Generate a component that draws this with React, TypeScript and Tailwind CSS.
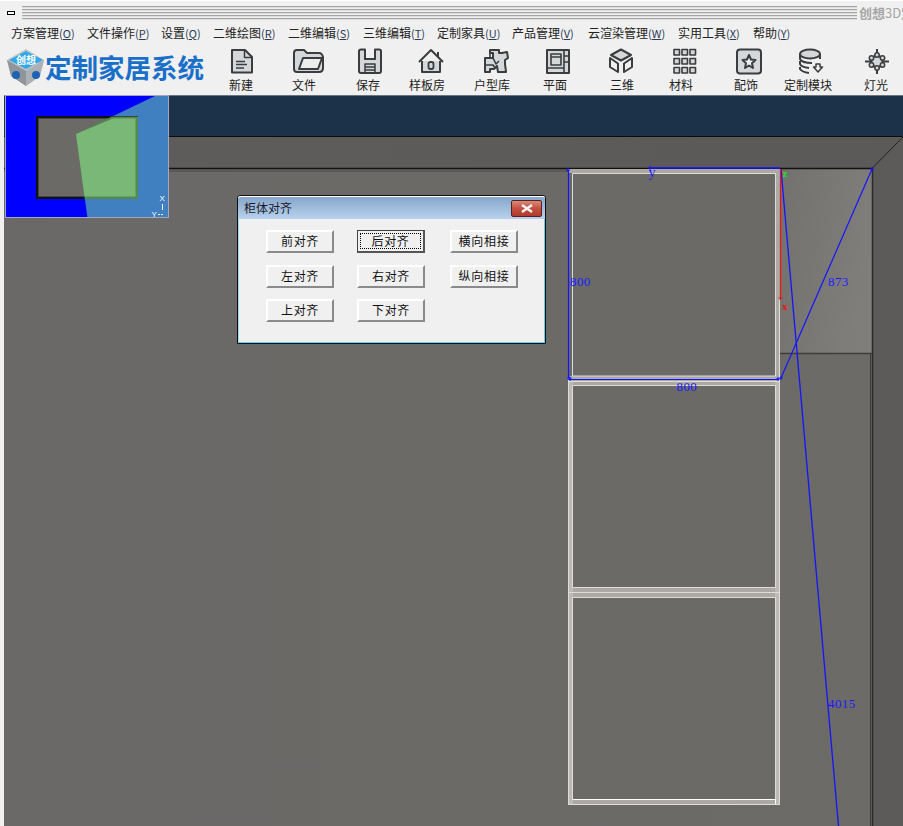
import React from "react";

const S = "#3a3c3e";
const F = "#d5d8da";

const menu: { t: string; k: string; w: string }[] = [
  { t: "方案管理", k: "O", w: "w-[76px]" },
  { t: "文件操作", k: "P", w: "w-[74px]" },
  { t: "设置", k: "Q", w: "w-[52px]" },
  { t: "二维绘图", k: "R", w: "w-[75px]" },
  { t: "二维编辑", k: "S", w: "w-[75px]" },
  { t: "三维编辑", k: "T", w: "w-[74px]" },
  { t: "定制家具", k: "U", w: "w-[75px]" },
  { t: "产品管理", k: "V", w: "w-[76px]" },
  { t: "云渲染管理", k: "W", w: "w-[90px]" },
  { t: "实用工具", k: "X", w: "w-[75px]" },
  { t: "帮助", k: "Y", w: "w-[60px]" },
];

const Ic = ({ children }: { children: React.ReactNode }) => (
  <svg width="34" height="27" viewBox="0 0 34 27" fill="none" stroke={S} strokeWidth="2" strokeLinejoin="round">{children}</svg>
);

const icons: Record<string, React.ReactNode> = {
  doc: (<Ic><path d="M7 2H20L27 9V24.500H7Z" fill={F} /><path d="M19.500 2V9.500H27" strokeWidth="1.500" /><path d="M11 13.500H20M11 16.500H22M11 20H19" strokeWidth="1.300" /></Ic>),
  folder: (<Ic><path d="M3 21V5Q3 2 6 2H13L16 5H28Q31 5 32 9V20Q32 24 28 24H6Q3 24 3 21Z" fill={F} /><path d="M8 21L12 10H31L27 21Z" fill="#eceded" /></Ic>),
  save: (<Ic><path d="M6 3Q6 1.500 8 1.500H12V11H22V1.500H26Q28 1.500 28 3V23Q28 25 26 25H8Q6 25 6 23Z" fill={F} /><path d="M12 16H22V25H12ZM12 19H22M12 22H22" strokeWidth="1.500" /><path d="M12 1.500V11H22V1.500" /></Ic>),
  house: (<Ic><path d="M5 14L17 2L29 14M24 4V9" /><path d="M8 13V24H26V13" fill={F} /><rect x="14.500" y="14" width="5" height="7" rx="2" strokeWidth="1.800" /></Ic>),
  plan: (<Ic><path d="M11 2H20V5H23L28 4L29 10L26 12V16L27 24H19L18 18L15 21H11V24H6V10H14V5L11 5Z" fill={F} /><path d="M6 17H14L16 20M20 13L17 16L14 10M11 2V9" strokeWidth="1.600" /></Ic>),
  flat: (<Ic><rect x="6" y="2" width="22" height="23" fill={F} /><path d="M10 6H20V17H10ZM23 2V25M6 20H23M23 8H28M23 14H28M10 9H20" strokeWidth="1.600" /></Ic>),
  cube: (<Ic><path d="M17 1.500L27 7L17 12.500L7 7Z" fill={F} /><path d="M6 10V19L14 24V15.500ZM28 10V19L20 24V15.500Z" fill="#f0f0f0" /></Ic>),
  grid: (<Ic>{[1.500, 10.500, 19.500].flatMap((y) => [7, 15, 23].map((x) => <rect key={x + "-" + y} x={x} y={y} width="5.500" height="5.500" fill={F} strokeWidth="1.600" />))}</Ic>),
  star: (<Ic><rect x="5" y="1.500" width="24" height="24" rx="3" fill={F} /><path d="M17 7L19 11.500L23.500 12L20 15.200L21 20L17 17.500L13 20L14 15.200L10.500 12L15 11.500Z" fill="#eceded" /></Ic>),
  db: (<Ic><ellipse cx="15" cy="6" rx="10" ry="4.500" fill={F} /><path d="M5 6V11Q7 15 17 15M5 13V16Q6 19 14 20M5 19V21Q7 24 14 25" /><path d="M25 6V11" /><path d="M21 16H25V19H27.500L23 24L18.500 19H21Z" strokeWidth="1.500" /></Ic>),
  light: (<Ic><path d="M17 1V7M17 20V26M5 13.500H11M23 13.500H29" /><path d="M17 7L22.500 10V17L17 20L11.500 17V10Z" fill={F} /><circle cx="17" cy="7" r="2.200" fill={F} strokeWidth="1.500" /><circle cx="17" cy="20" r="2.200" fill={F} strokeWidth="1.500" /><circle cx="11.500" cy="10" r="2.200" fill={F} strokeWidth="1.500" /><circle cx="22.500" cy="10" r="2.200" fill={F} strokeWidth="1.500" /><circle cx="11.500" cy="17" r="2.200" fill={F} strokeWidth="1.500" /><circle cx="22.500" cy="17" r="2.200" fill={F} strokeWidth="1.500" /></Ic>),
};

const tools = [
  { label: "新建", icon: "doc", m: "ml-[4px]", o: "ml-[2px]" },
  { label: "文件", icon: "folder", m: "ml-[7px]", o: "ml-[8px]" },
  { label: "保存", icon: "save", m: "ml-[8px]", o: "ml-[4px]" },
  { label: "样板房", icon: "house", m: "ml-[3px]", o: "ml-[8px]" },
  { label: "户型库", icon: "plan", m: "ml-[9px]", o: "ml-[8px]" },
  { label: "平面", icon: "flat", m: "ml-[7px]", o: "ml-[5px]" },
  { label: "三维", icon: "cube", m: "ml-[11px]", o: "mr-[2px]" },
  { label: "材料", icon: "grid", m: "ml-[3px]", o: "ml-[6px]" },
  { label: "配饰", icon: "star", m: "ml-[9px]", o: "ml-[6px]" },
  { label: "定制模块", icon: "db", m: "ml-[6px]", o: "ml-[8px]" },
  { label: "灯光", icon: "light", m: "ml-[12px]", o: "ml-[2px]" },
];

const Btn = ({ label, focus, className = "" }: { label: string; focus?: boolean; className?: string }) => (
  <div className={`flex h-[23px] w-[68px] items-center justify-center bg-[#f0f0f0] text-[12px] tracking-[0.7px] text-[#111] ${focus ? "border border-[#444] border-r-2 border-b-2 border-r-[#555] border-b-[#555] p-[2px]" : "border-2 border-t-white border-l-white border-r-[#8a8a8a] border-b-[#8a8a8a] pb-[2px]"} ${className}`}>
    {focus ? (
      <div className="flex h-full w-full items-center justify-center border border-dotted border-black pb-[1px]">{label}</div>
    ) : label}
  </div>
);

const Mark = ({ x, y }: { x: number; y: number }) => (
  <path d={`M${x - 2} ${y}H${x + 2}M${x} ${y - 2}V${y + 2}`} stroke="#1414ff" strokeWidth="1" fill="none" />
);

const Scene = () => (
  <svg className="block h-full w-full" viewBox="4 95 899 731" preserveAspectRatio="none">
    <defs>
      <linearGradient id="panel" x1="0" y1="0" x2="1" y2="0.3">
        <stop offset="0" stopColor="#73716e" />
        <stop offset="1" stopColor="#807e7a" />
      </linearGradient>
      <linearGradient id="wall" x1="0" y1="0" x2="1" y2="0">
        <stop offset="0" stopColor="#6a6967" />
        <stop offset="1" stopColor="#6c6b68" />
      </linearGradient>
      <linearGradient id="ceil" x1="0" y1="0" x2="1" y2="0">
        <stop offset="0" stopColor="#5e5d5b" />
        <stop offset="1" stopColor="#5b5a58" />
      </linearGradient>
    </defs>
    <rect x="4" y="95" width="899" height="731" fill="url(#wall)" />
    <rect x="4" y="95" width="899" height="42" fill="#1c3249" />
    <rect x="4" y="95" width="899" height="1" fill="#6b7480" />
    <rect x="4" y="137" width="899" height="31" fill="url(#ceil)" />
    <path d="M4 136.500H903" stroke="#0c0c0c" />
    <path d="M873 168L903 137V826H873Z" fill="#5c5b59" />
    <path d="M872.500 168L903 137" stroke="#222" />
    <rect x="780" y="168" width="92" height="185" fill="url(#panel)" />
    <path d="M4 168.500H872" stroke="#111" strokeWidth="1.500" />
    <path d="M4 171H568" stroke="#4a4948" />
    <path d="M872.500 168V826" stroke="#2b2a29" strokeWidth="1.500" />
    <path d="M870.500 353V826" stroke="#3b3a39" />
    <path d="M780 353.500H872" stroke="#3f3e3c" strokeWidth="1.500" />

    <rect x="568" y="169" width="212" height="636" fill="#aca9a3" />
    <rect x="568" y="381" width="5" height="424" fill="#bdbab4" />
    <rect x="775" y="381" width="5" height="424" fill="#bdbab4" />
    <rect x="569" y="173" width="4" height="203" fill="#6b6a67" />
    <rect x="573" y="173" width="202" height="203" fill="#6b6a67" />
    <rect x="573" y="386" width="202" height="201" fill="#6b6a67" />
    <rect x="573" y="597" width="202" height="202" fill="#6b6a67" />
    <g stroke="#dedcd8" fill="none" strokeWidth="1">
      <path d="M572.500 173.500H775.500V376M572.500 173.500V376H775.500" />
      <path d="M572.500 385.500H775.500V587.500M572.500 385.500V587.500H775.500" />
      <path d="M572.500 597.500H775.500V799M572.500 597.500V799" />
      <path d="M568.500 381.500H779.500M568.500 592.500H779.500" />
      <path d="M568.500 380V804.500H779.500V300" />
      <path d="M572.500 799.500H775.500V804" stroke="#ffffff" />
    </g>

    <g stroke="#1414ff" fill="none" strokeWidth="1.200">
      <path d="M568.500 170V378" />
      <path d="M569 379.500H779" />
      <path d="M650 168H780" strokeWidth="1.500" />
      <path d="M781 169L838.500 826" strokeWidth="1.300" />
      <path d="M781 378L872 169" />
    </g>
    <path d="M780.500 169V298" stroke="#f01010" strokeWidth="1.200" />
    <path d="M778.500 298H782.500M780.500 296V300" stroke="#f01010" />
    <Mark x={568} y={170} />
    <Mark x={650} y={168} />
    <Mark x={569} y={378} />
    <Mark x={570} y={379} />
    <Mark x={778} y={379} />
    <Mark x={781} y={378} />
    <Mark x={872} y={169} />
    <g fontFamily="'Liberation Serif', serif" fontSize="13" fill="#1a1aff" letterSpacing="0.4">
      <text x="570" y="285.500">800</text>
      <text x="828" y="285.500">873</text>
      <text x="676.500" y="391">800</text>
      <text x="828" y="708">4015</text>
      <text x="648.500" y="177" fontSize="14">y</text>
    </g>
    <text x="782.500" y="177" fontFamily="'Liberation Serif', serif" fontWeight="700" fontSize="11" fill="#19e619">z</text>
    <text x="782" y="310" fontFamily="'Liberation Serif', serif" fontWeight="700" fontSize="11" fill="#f01010">x</text>
  </svg>
);

const MiniMap = () => (
  <svg className="block h-[123px] w-[164px]" viewBox="5 95 164 123">
    <rect x="5" y="95" width="164" height="123" fill="#0000ff" />
    <path d="M157 95H169V218H87.500L76 134Z" fill="#4080c0" />
    <rect x="36" y="116" width="102" height="83" fill="#111" />
    <rect x="38.500" y="118.500" width="97" height="78" fill="#6b6a67" stroke="#444" />
    <path d="M112 116.500H138V199H84.700L76 134Z" fill="#528a52" />
    <path d="M113 118.500H135.500V196.500H84.500L76 134Z" fill="#7ab878" />
    <rect x="5.500" y="95.500" width="163" height="122" fill="none" stroke="#a6a6c0" />
    <g fontFamily="'Liberation Sans', sans-serif" fontSize="8" fill="#fff">
      <text x="159.500" y="201">X</text>
      <text x="151.500" y="217">Y</text>
    </g>
    <path d="M162.500 204V210M158 214.500H160M161 214.500H163" stroke="#fff" />
  </svg>
);

export default function App() {
  return (
    <div className="flex h-[826px] w-[903px] flex-col overflow-hidden bg-[#f0f0f0] font-['Noto_Sans_CJK_SC','Liberation_Sans',sans-serif] text-[12px] text-[#222]">
      <div className="h-[1px] bg-white" />
      <div className="flex h-[23px] items-start overflow-hidden pt-[5px]">
        <div className="ml-[7px] mt-[5px] h-[4px] w-[8px] shrink-0 border border-black bg-white" />
        <div className="ml-[7px] h-[14px] w-[835px] shrink-0 bg-[repeating-linear-gradient(to_bottom,#a4a4a4_0,#a4a4a4_1px,#dedede_1px,#dedede_2px,#f0f0f0_2px,#f0f0f0_3px)]" />
        <div className="ml-[2px] shrink-0 whitespace-nowrap text-[13px] font-bold leading-[14px] text-[#a6a6a6]">创想<span className="font-normal">3D</span>定制</div>
      </div>
      <div className="flex h-[18px] items-center pl-[11px]">
        {menu.map(({ t, k, w }) => (
          <div key={t} className={`flex shrink-0 items-center whitespace-nowrap leading-[18px] ${w}`}>
            {t}
            <span className="text-[11px] text-[#2c3c55]">(<span className="underline">{k}</span>)</span>
          </div>
        ))}
      </div>
      <div className="flex h-[53px] items-start">
        <div className="flex w-[209px] shrink-0 items-center pl-[6px] pt-[5px]">
          <svg className="h-[40px] w-[40px] shrink-0" viewBox="0 0 40 40">
            <path d="M20 2L38 13L34 29L20 39L5 29L1 13Z" fill="#c4c4c4" />
            <path d="M1 13L20 24V39L5 29Z" fill="#8f959b" />
            <path d="M38 13L20 24V39L34 29Z" fill="#aab0b6" />
            <path d="M20 4L37 13L20 22L3 13Z" fill="#2fa9e8" />
            <circle cx="10" cy="28" r="4" fill="#1d63b5" />
            <circle cx="30" cy="28" r="4" fill="#1d63b5" />
            <text x="20" y="17" textAnchor="middle" fontSize="10" fontWeight="700" fill="#fff">创想</text>
          </svg>
          <div className="-ml-[1px] whitespace-nowrap text-[26.500px] font-bold leading-[34px] text-[#1a6fc9]">定制家居系统</div>
        </div>
        {tools.map((t) => (
          <div key={t.label} className={`flex w-[56px] shrink-0 flex-col items-center pt-[6px] ${t.m}`}>
            <div className={`flex h-[27px] items-center justify-center ${t.o}`}>{icons[t.icon]}</div>
            <div className="mt-[1px] whitespace-nowrap leading-[18px]">{t.label}</div>
          </div>
        ))}
      </div>
      <div className="relative ml-[4px] min-h-0 flex-1">
        <Scene />
        <div className="absolute left-[1px] top-0">
          <MiniMap />
        </div>
        <div className="absolute left-[233px] top-[100px] flex h-[149px] w-[309px] flex-col rounded-t-[3px] border border-[#111] bg-[#f0f0f0] shadow-[inset_-1px_-1px_0_#5cd0ea,inset_1px_0_0_#9ad8ea]">
          <div className="flex h-[23px] items-center justify-between rounded-t-[3px] border-t border-t-white bg-gradient-to-b from-[#88a6cb] to-[#b8d2ec] pl-[6px] pr-[3px] text-[12px] text-[#1a1a2a]">
            <span>柜体对齐</span>
            <div className="flex h-[17px] w-[31px] items-center justify-center rounded-[2px] border border-[#5a2020] bg-gradient-to-b from-[#d88a7c] via-[#c4503f] to-[#b23a2c]">
              <svg width="14" height="9" viewBox="0 0 14 9"><path d="M2 1L12 8M12 1L2 8" stroke="#f5f5f5" strokeWidth="2.400" /></svg>
            </div>
          </div>
          <div className="flex flex-col pl-[28px] pt-[11px]">
            <div className="flex">
              <Btn label="前对齐" />
              <Btn label="后对齐" focus className="ml-[23px]" />
              <Btn label="横向相接" className="ml-[25px]" />
            </div>
            <div className="mt-[12px] flex">
              <Btn label="左对齐" />
              <Btn label="右对齐" className="ml-[23px]" />
              <Btn label="纵向相接" className="ml-[25px]" />
            </div>
            <div className="mt-[11px] flex">
              <Btn label="上对齐" />
              <Btn label="下对齐" className="ml-[23px]" />
            </div>
          </div>
        </div>
      </div>
    </div>
  );
}
